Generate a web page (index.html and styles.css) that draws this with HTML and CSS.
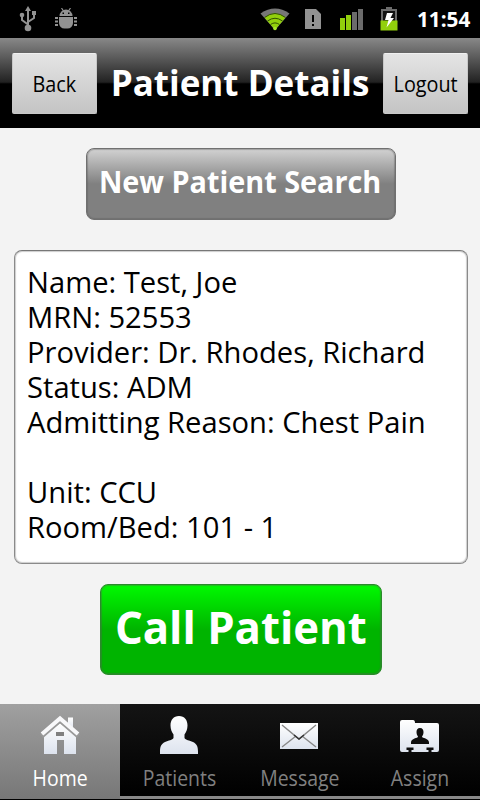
FILE: index.html
```html
<!DOCTYPE html>
<html lang="en">
<head>
  <meta charset="UTF-8" />
  <meta name="viewport" content="width=device-width, initial-scale=1" />
  <title>Patient Details</title>
  <link rel="stylesheet" href="styles.css">
</head>
<body>
  <!-- Status bar -->
  <div class="status-bar">
    <div class="status-icons">
      <svg class="usb" width="18" height="26" viewBox="0 0 18 26" fill="#929292" stroke="#929292">
        <path d="M9 0l3 5H6z" stroke="none" />
        <path d="M9 4v16M9 18.500l-6-4.500V9M9 16l6-4V8" fill="none" stroke-width="2" />
        <circle cx="9" cy="22" r="3.300" stroke="none" />
        <circle cx="3" cy="9" r="2.300" stroke="none" />
        <path d="M13 5h4v4h-4z" stroke="none" />
      </svg>
      <svg class="debug" width="22" height="22" viewBox="0 0 22 22" fill="#929292">
        <path d="M4.500 8a6.500 6.500 0 0 1 13 0z" />
        <path d="M6.500 0l2 3M15.500 0l-2 3" fill="none" stroke="#929292" stroke-width="1.200" />
        <path d="M4 9h14v6a5.500 5.500 0 0 1-5.500 5.500h-3A5.500 5.500 0 0 1 4 15z" />
        <path d="M0 9h3v2H0zM0 12.500h3v2H0zM0 16h3v2H0zM19 9h3v2h-3zM19 12.500h3v2h-3zM19 16h3v2h-3z" />
        <path d="M7.500 4.500h1.500v1.500h-1.500zM13 4.500h1.500v1.500h-1.500z" fill="#000" />
      </svg>
    </div>
    <div class="status-icons">
      <svg class="wifi" width="30" height="23" viewBox="0 0 30 23">
        <path d="M15 22L.500 5.500Q15-4.500 29.500 5.500z" fill="#777" />
        <path d="M15 22L4.500 9.500Q15 1.500 25.500 9.500z" fill="#92cf0c" />
        <path d="M4.500 9.500Q15 1.500 25.500 9.500M7.500 13Q15 7.500 22.500 13M10.500 16.500Q15 13.300 19.500 16.500" fill="none" stroke="#315000" stroke-width="1" />
        <circle cx="15" cy="20.500" r="1.800" fill="#a9e62a" />
      </svg>
      <svg class="sim" width="16" height="20" viewBox="0 0 16 20">
        <path d="M0 0h11l5 5v15H0z" fill="#929292" />
        <path d="M7 6h2v7H7zM7 15h2v2H7z" fill="#000" />
      </svg>
      <svg class="signal" width="24" height="22" viewBox="0 0 24 22">
        <path d="M0 9h5v12H0zM6 6h5v15H6z" fill="#92cf0c" />
        <path d="M12 3h5v18h-5zM18 0h5v21h-5z" fill="#6b6b6b" />
      </svg>
      <svg class="battery" width="18" height="24" viewBox="0 0 18 24">
        <path d="M6 0h6v3H6z" fill="#6b6b6b" />
        <path d="M2 3h14v19H2z" fill="#111" stroke="#6b6b6b" stroke-width="2" />
        <path d="M.500 13.500h17v10H.500z" fill="#92cf0c" />
        <path d="M7 6h6l-2.500 5H14L6.500 20.500l2-7.500H5z" fill="#fff" />
      </svg>
      <span class="clock">11:54</span>
    </div>
  </div>

  <header>
    <a href="#" class="header-btn"><span>Back</span></a>
    <h1>Patient Details</h1>
    <a href="#" class="header-btn"><span>Logout</span></a>
  </header>

  <main>
    <button class="btn search-btn"><span>New Patient Search</span></button>

    <section class="card">
      <p>Name: Test, Joe</p>
      <p>MRN: 52553</p>
      <p>Provider: Dr. Rhodes, Richard</p>
      <p>Status: ADM</p>
      <p>Admitting Reason: Chest Pain</p>
      <p class="room">Unit: CCU</p>
      <p>Room/Bed: 101 - 1</p>
    </section>

    <button class="btn call-btn"><span>Call Patient</span></button>
  </main>

  <!-- Bottom tabs -->
  <nav>
    <svg class="defs" width="0" height="0">
      <linearGradient id="shade" x1="0" y1="0" x2="0" y2="1">
        <stop offset="0" stop-color="#fff" />
        <stop offset="1" stop-color="#dde3ee" />
      </linearGradient>
    </svg>
    <a href="#" class="tab active">
      <svg width="40" height="40" viewBox="0 0 40 40" fill="url(#shade)">
        <path d="M28 2.500h5v12l-5-4z" />
        <path d="M20 8l16 13v18H24V25h-7v14H4V21z" />
        <path d="M16 17h8v4h-8z" fill="#808080" />
        <path d="M1.500 21L20 5l18.500 16" fill="none" stroke="#999" stroke-width="5" />
        <path d="M2 19L20 3.500l18 15.500" fill="none" stroke="#f8f8fa" stroke-width="4" />
      </svg>
      <span>Home</span>
    </a>
    <a href="#" class="tab">
      <svg width="40" height="40" viewBox="0 -1 40 40" fill="url(#shade)">
        <path d="M19 0c5.500 0 8.500 4 8.500 9.500 0 4-1.500 7-3 9V22c1 2 5 2.500 8.500 4 4 2 5 5 5 9.500v2.500H0v-2.500c0-4.500 1-7.500 5-9.500 3.500-1.500 7.500-2 8.500-4v-3.500c-1.500-2-3-5-3-9C10.500 4 13.500 0 19 0z" />
      </svg>
      <span>Patients</span>
    </a>
    <a href="#" class="tab">
      <svg width="40" height="40" viewBox="0 -1 40 40" fill="url(#shade)">
        <path d="M0 7h38v26H0z" />
        <path d="M2 9l17 14L36 9M2 31l14-11M36 31L22 20" fill="none" stroke="#888" stroke-width="1.400" />
        <path d="M14 19l5 4 5-4" fill="none" stroke="#333" stroke-width="1.400" />
      </svg>
      <span>Message</span>
    </a>
    <a href="#" class="tab">
      <svg width="40" height="40" viewBox="0 -1 40 40" fill="url(#shade)">
        <path d="M2 4h11q2 0 2 3h22q2 0 2 2v25q0 2-2 2H2q-2 0-2-2V6q0-2 2-2z" />
        <path d="M20 12c2.500 0 3.500 2 3.500 4 0 2-.500 3-1.500 4.500 0 2 7 1.500 7 6V28H11v-1.500c0-4.500 7-4 7-6-1-1.500-1.500-2.500-1.500-4.500 0-2 1-4 3.500-4zM6.500 31.500h7v2.500h-2v2h-3v-2h-2zM26.500 31.500h7v2.500h-2v2h-3v-2h-2z" fill="#0d0d0d" />
      </svg>
      <span>Assign</span>
    </a>
  </nav>
</body>
</html>
```
FILE: styles.css
```css
* {
  margin: 0;
  padding: 0;
  box-sizing: border-box;
  font-family: 'Open Sans', 'Noto Sans', sans-serif;
}

body {
  width: 480px;
  height: 800px;
  display: flex;
  flex-direction: column;
  background: #f3f3f3;
  overflow: hidden;
}

a {
  text-decoration: none;
}

/* Status bar */
.status-bar {
  height: 38px;
  padding: 0 10px 0 19px;
  display: flex;
  justify-content: space-between;
  background: #000;
}

.status-icons {
  display: flex;
  align-items: center;
}

.debug {
  margin-left: 18px;
}

.wifi {
  margin-right: 15px;
}

.sim {
  margin-right: 19px;
}

.signal {
  margin-right: 16px;
  margin-top: 1px;
}

.battery {
  margin-right: 19px;
}

.clock {
  width: 53px;
  color: #fff;
  font-size: 21px;
  font-weight: bold;
  white-space: nowrap;
  transform: scaleX(0.985);
  transform-origin: left;
}

/* Header */
header {
  height: 90px;
  padding: 0 12px;
  display: flex;
  justify-content: space-between;
  align-items: center;
  background: linear-gradient(#888, #222 49%, #000 51%);
}

.header-btn {
  width: 85px;
  height: 61px;
  flex-shrink: 0;
  display: flex;
  justify-content: center;
  align-items: center;
  background: linear-gradient(#e4e4e4, #c4c4c4);
  border: 1px solid #c8c8c8;
  border-top-color: #f0f0f0;
  border-radius: 2px;
  color: #000;
  font-size: 22px;
}

.header-btn span {
  transform: scaleX(0.9);
}

h1 {
  width: 258px;
  display: flex;
  justify-content: center;
  color: #fff;
  font-size: 35px;
  line-height: 44px;
  white-space: nowrap;
}

/* Content */
main {
  flex: 1;
  padding: 20px 13px 0 14px;
  display: flex;
  flex-direction: column;
  align-items: center;
}

.btn {
  display: flex;
  justify-content: center;
  align-items: center;
  padding-bottom: 5px;
  border: 1px solid #707070;
  border-radius: 8px;
  box-shadow: inset 0 0 1px 1px rgba(90, 90, 90, 0.4);
  color: #fff;
  font-weight: bold;
  white-space: nowrap;
}

.search-btn {
  width: 310px;
  height: 72px;
  background: linear-gradient(#d2d2d2, #808080 50%);
  font-size: 30px;
}

.search-btn span {
  transform: scaleX(0.96);
}

.card {
  width: 454px;
  height: 314px;
  margin: 30px 0 20px;
  padding: 13px 12px;
  background: #fff;
  border: 1px solid #8a8a8a;
  border-top-color: #777;
  border-radius: 8px;
  box-shadow: inset 0 0 1px 1px #ccc;
}

.card p {
  font-size: 30px;
  line-height: 35px;
  white-space: nowrap;
  transform: scaleX(0.972);
  transform-origin: left;
}

.card .room {
  margin-top: 35px;
}

.call-btn {
  width: 282px;
  height: 91px;
  background: linear-gradient(#00fa00, #00b400 50%);
  border-color: #2b8a2b;
  font-size: 44px;
}

.call-btn span {
  transform: scaleX(0.993);
}

/* Tabs */
nav {
  height: 96px;
  display: flex;
  background: #000;
}

.defs {
  position: absolute;
}

.tab {
  width: 120px;
  height: 95px;
  padding-top: 11px;
  display: flex;
  flex-direction: column;
  align-items: center;
  background: linear-gradient(#141414, #000);
  border-bottom: 3px solid #888;
  color: #808080;
  font-size: 22px;
  line-height: 30px;
}

.tab.active {
  background: linear-gradient(#a0a0a0, #777);
  border-bottom: none;
  color: #fff;
}

.tab span {
  margin-top: 7px;
  transform: scaleX(0.885);
}
```
